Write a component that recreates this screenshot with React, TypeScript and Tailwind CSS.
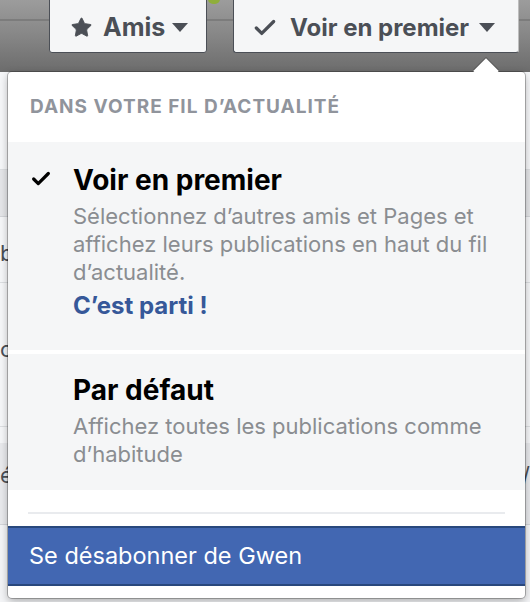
import { Check, Star } from "lucide-react";

function Caret({ className }: { className?: string }) {
  return (
    <svg viewBox="0 0 16 10" className={className} fill="currentColor">
      <path d="M0 0h16L8 9z" />
    </svg>
  );
}

function MenuItem({
  checked,
  title,
  lines,
  link,
}: {
  checked?: boolean;
  title: string;
  lines: string;
  link?: string;
}) {
  return (
    <div className="flex bg-[#f5f6f7] pl-[22px] pr-6">
      <div className="w-[43px] shrink-0 pt-[4px]">
        {checked && <Check className="w-[22px] h-[22px] text-black" strokeWidth={3.5} />}
      </div>
      <div className="flex flex-col">
        <div className="text-[28px] font-bold text-black leading-[32px]">{title}</div>
        <div className="mt-[6px] text-[22px] leading-[28px] text-[#8a8d91]">{lines}</div>
        {link && (
          <div className="mt-[6px] text-[24px] leading-[28px] font-bold text-[#365899]">{link}</div>
        )}
      </div>
    </div>
  );
}

export default function App() {
  return (
    <div
      className="relative w-[530px] h-[602px] overflow-hidden bg-[#f4f5f7]"
      style={{ fontFamily: "Inter, 'Liberation Sans', sans-serif" }}
    >
      {/* Cover strip with the two buttons */}
      <div className="relative h-[72px] bg-gradient-to-b from-[#9c9c9c] via-[#868686] to-[#6c6c6c]">
        <div className="absolute left-0 right-0 top-[19px] h-[2px] bg-[#6f6f6f] opacity-60" />
        <div className="absolute left-[208px] -top-[6px] w-[12px] h-[10px] rounded-full bg-[#8fae3b]" />
        <div className="relative flex items-end gap-[26px] pl-[49px] h-[53px]">
          <div className="flex items-center h-[60px] w-[158px] pl-[20px] pt-[9px] bg-[#f5f6f7] border border-[#4b4f56] rounded-b-[3px] text-[#4b4f56] text-[25px] font-bold">
            <Star className="w-[23px] h-[23px] fill-[#4b4f56] mr-[10px]" strokeWidth={1} />
            <span>Amis</span>
            <Caret className="w-[16px] h-[10px] ml-[7px]" />
          </div>
          <div className="flex items-center h-[60px] w-[286px] pl-[18px] pt-[9px] bg-[#f5f6f7] border border-[#4b4f56] border-r-[#bdbdbd] rounded-b-[3px] text-[#4b4f56] text-[24px] font-bold">
            <Check className="w-[26px] h-[26px] mr-[12px]" strokeWidth={3} />
            <span>Voir en premier</span>
            <Caret className="w-[16px] h-[10px] ml-[10px]" />
          </div>
        </div>
      </div>

      {/* Page behind the menu */}
      <div className="flex flex-col text-[22px] text-[#4b4f56]">
        <div className="h-[98px] bg-[#f6f7f9] border-b border-[#dddfe2]" />
        <div className="h-[47px] bg-[#e5e6e9] border-b border-[#d3d5d9]" />
        <div className="h-[66px] bg-[#f6f7f9] border-b border-[#dddfe2] pt-[20px]">b</div>
        <div className="h-[144px] bg-[#f6f7f9] border-b border-[#dddfe2] pt-[50px]">c</div>
        <div className="h-[16px] bg-[#f6f7f9]" />
        <div className="h-[82px] bg-[#e9eaed] border-b border-[#d3d5d9] flex justify-between pt-[16px]">
          <span>é</span>
          <span>/</span>
        </div>
      </div>

      {/* Dropdown menu */}
      <div className="absolute left-[8px] top-[72px] w-[517px] h-[526px] bg-white rounded-[4px] shadow-[0_0_0_1px_rgba(0,0,0,0.25),0_3px_8px_rgba(0,0,0,0.3)]">
        <div className="absolute right-[30px] -top-[10px] w-[18px] h-[18px] rotate-45 bg-white shadow-[-1px_-1px_0_rgba(0,0,0,0.2)]" />
        <div className="relative flex flex-col">
          <div className="h-[70px] pl-[22px] pt-[21px] text-[19px] font-bold tracking-[1px] text-[#90949c] uppercase">
            Dans votre fil d’actualité
          </div>
          <div className="pt-[22px] pb-[30px] bg-[#f5f6f7]">
            <MenuItem
              checked
              title="Voir en premier"
              lines="Sélectionnez d’autres amis et Pages et affichez leurs publications en haut du fil d’actualité."
              link="C’est parti !"
            />
          </div>
          <div className="h-[4px] bg-white" />
          <div className="pt-[20px] pb-[22px] bg-[#f5f6f7]">
            <MenuItem title="Par défaut" lines="Affichez toutes les publications comme d’habitude" />
          </div>
          <div className="h-[22px]" />
          <div className="mx-[20px] h-[2px] bg-[#e9ebee]" />
          <div className="h-[12px]" />
          <div className="h-[60px] flex items-center pl-[21px] bg-[#4267b2] border-y-2 border-[#29487d] text-white text-[23.5px]">
            Se désabonner de Gwen
          </div>
        </div>
      </div>
    </div>
  );
}
